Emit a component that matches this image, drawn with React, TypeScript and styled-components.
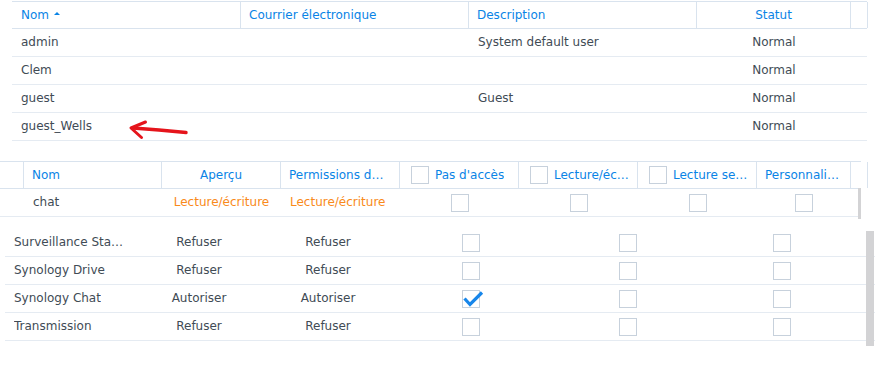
import styled, { createGlobalStyle } from 'styled-components';

const BLUE = '#0a84e6';
const TEXT = '#414b55';
const ORANGE = '#f98a1a';
const LINE = '#e5ebf2';
const HEAD_LINE = '#d9e3ee';

const GlobalStyle = createGlobalStyle`
  html, body {
    margin: 0;
    padding: 0;
    background: #ffffff;
  }
  body {
    font-family: 'DejaVu Sans', Verdana, sans-serif;
    font-size: 12px;
    color: ${TEXT};
  }
`;

const Page = styled.div`
  width: 894px;
  height: 380px;
  padding-top: 1px;
  box-sizing: border-box;
  overflow: hidden;
  display: flex;
  flex-direction: column;
  align-items: flex-start;
`;

const Table = styled.div<{ $left: number; $width: number; $gap: number }>`
  position: relative;
  margin-left: ${p => p.$left}px;
  margin-top: ${p => p.$gap}px;
  width: ${p => p.$width}px;
`;

const HeaderRow = styled.div<{ $cols: string }>`
  display: grid;
  grid-template-columns: ${p => p.$cols};
  height: 28px;
  box-sizing: border-box;
  border-top: 1px solid ${HEAD_LINE};
  border-bottom: 1px solid ${HEAD_LINE};
`;

const HeadCell = styled.div<{ $align?: string; $pl?: number; $pr?: number }>`
  display: flex;
  align-items: center;
  justify-content: ${p => (p.$align === 'center' ? 'center' : 'flex-start')};
  gap: 6px;
  min-width: 0;
  padding: 0 ${p => p.$pr ?? 8}px 0 ${p => p.$pl ?? 8}px;
  border-right: 1px solid ${HEAD_LINE};
  color: ${BLUE};
  line-height: 26px;
  white-space: nowrap;
  overflow: hidden;
`;

const HeadLabel = styled.span`
  min-width: 0;
  overflow: hidden;
  text-overflow: ellipsis;
`;

const SortUp = styled.span`
  display: inline-block;
  width: 0;
  height: 0;
  margin-left: -1px;
  margin-top: -3px;
  border-left: 3px solid transparent;
  border-right: 3px solid transparent;
  border-bottom: 3px solid ${BLUE};
`;

const BodyRow = styled.div<{ $cols: string }>`
  position: relative;
  display: grid;
  grid-template-columns: ${p => p.$cols};
  height: 28px;
  box-sizing: border-box;
  border-bottom: 1px solid ${LINE};
`;

const Cell = styled.div<{ $align?: string; $tone?: 'orange' }>`
  display: flex;
  align-items: center;
  justify-content: ${p => (p.$align === 'center' ? 'center' : 'flex-start')};
  min-width: 0;
  padding: 0 9px;
  line-height: 27px;
  color: ${p => (p.$tone === 'orange' ? ORANGE : TEXT)};
  white-space: nowrap;
  overflow: hidden;
`;

const CellText = styled.span`
  min-width: 0;
  overflow: hidden;
  text-overflow: ellipsis;
`;

const Box = styled.span`
  position: relative;
  flex: none;
  display: inline-block;
  width: 18px;
  height: 18px;
  box-sizing: border-box;
  border: 1px solid #c7d1dc;
  background: #fff;
`;

const Tick = styled.svg`
  position: absolute;
  left: -1px;
  top: -1px;
  overflow: visible;
`;

const Scrollbar = styled.div<{ $w: number; $h: number; $top: number; $right: number }>`
  position: absolute;
  right: ${p => p.$right}px;
  top: ${p => p.$top}px;
  width: ${p => p.$w}px;
  height: ${p => p.$h}px;
  background: #d3d3d5;
`;

const Annotation = styled.svg`
  position: absolute;
  left: 114px;
  top: 6px;
  overflow: visible;
`;

function Checkbox({ checked }: { checked?: boolean }) {
  return (
    <Box>
      {checked && (
        <Tick width='18' height='18' viewBox='0 0 18 18'>
          <path
            d='M2.5 8.5 L8 14.5 L20 2.5'
            fill='none'
            stroke='#1786ea'
            strokeWidth='3.2'
          />
        </Tick>
      )}
    </Box>
  );
}

const USERS_COLS = '229px 228px 228px 154px 16px';
const users = [
  { name: 'admin', mail: '', desc: 'System default user', status: 'Normal' },
  { name: 'Clem', mail: '', desc: '', status: 'Normal' },
  { name: 'guest', mail: '', desc: 'Guest', status: 'Normal' },
  { name: 'guest_Wells', mail: '', desc: '', status: 'Normal', mark: true },
];

const SHARE_COLS = '24px 138px 119px 119px 119px 119px 119px 94px 10px';
const APPS_COLS = '130px 128px 130px 156px 158px 150px 18px';
const apps = [
  { name: 'Surveillance Station', a: 'Refuser', b: 'Refuser', ok: false },
  { name: 'Synology Drive', a: 'Refuser', b: 'Refuser', ok: false },
  { name: 'Synology Chat', a: 'Autoriser', b: 'Autoriser', ok: true },
  { name: 'Transmission', a: 'Refuser', b: 'Refuser', ok: false },
];

export default function App() {
  return (
    <>
      <GlobalStyle />
      <Page>
        <Table $left={12} $width={855} $gap={0}>
          <HeaderRow $cols={USERS_COLS}>
            <HeadCell $pl={9}>
              <HeadLabel>Nom</HeadLabel>
              <SortUp />
            </HeadCell>
            <HeadCell>Courrier électronique</HeadCell>
            <HeadCell>Description</HeadCell>
            <HeadCell $align='center'>Statut</HeadCell>
            <HeadCell />
          </HeaderRow>
          {users.map(u => (
            <BodyRow key={u.name} $cols={USERS_COLS}>
              <Cell>{u.name}</Cell>
              <Cell>{u.mail}</Cell>
              <Cell>{u.desc}</Cell>
              <Cell $align='center'>{u.status}</Cell>
              <Cell />
              {u.mark && (
                <Annotation width='64' height='22' viewBox='0 0 64 22'>
                  <path
                    d='M7 9 L33 11 L60 13.5'
                    fill='none'
                    stroke='#e5141b'
                    strokeWidth='3.4'
                    strokeLinecap='round'
                  />
                  <path
                    d='M19.5 3 L5 9 L15.5 18.5'
                    fill='none'
                    stroke='#e5141b'
                    strokeWidth='3'
                    strokeLinecap='round'
                    strokeLinejoin='round'
                  />
                </Annotation>
              )}
            </BodyRow>
          ))}
        </Table>

        <Table $left={0} $width={861} $gap={20}>
          <HeaderRow $cols={SHARE_COLS}>
            <HeadCell />
            <HeadCell>Nom</HeadCell>
            <HeadCell $align='center'>Aperçu</HeadCell>
            <HeadCell $pr={10}>
              <HeadLabel>Permissions de l'application</HeadLabel>
            </HeadCell>
            <HeadCell $pl={11} $pr={6}>
              <Checkbox />
              <HeadLabel>Pas d'accès</HeadLabel>
            </HeadCell>
            <HeadCell $pl={11} $pr={6}>
              <Checkbox />
              <HeadLabel>Lecture/écriture</HeadLabel>
            </HeadCell>
            <HeadCell $pl={11} $pr={6}>
              <Checkbox />
              <HeadLabel>Lecture seule</HeadLabel>
            </HeadCell>
            <HeadCell>
              <HeadLabel>Personnaliser</HeadLabel>
            </HeadCell>
            <HeadCell />
          </HeaderRow>
          <BodyRow $cols={SHARE_COLS}>
            <Cell />
            <Cell>chat</Cell>
            <Cell $align='center' $tone='orange'>
              Lecture/écriture
            </Cell>
            <Cell $tone='orange'>Lecture/écriture</Cell>
            <Cell $align='center'>
              <Checkbox />
            </Cell>
            <Cell $align='center'>
              <Checkbox />
            </Cell>
            <Cell $align='center'>
              <Checkbox />
            </Cell>
            <Cell $align='center'>
              <Checkbox />
            </Cell>
            <Cell />
          </BodyRow>
          <Scrollbar $w={3} $h={31} $top={27} $right={0} />
        </Table>

        <Table $left={5} $width={870} $gap={12}>
          {apps.map(a => (
            <BodyRow key={a.name} $cols={APPS_COLS}>
              <Cell>
                <CellText>{a.name}</CellText>
              </Cell>
              <Cell $align='center'>{a.a}</Cell>
              <Cell $align='center'>{a.b}</Cell>
              <Cell $align='center'>
                <Checkbox checked={a.ok} />
              </Cell>
              <Cell $align='center'>
                <Checkbox />
              </Cell>
              <Cell $align='center'>
                <Checkbox />
              </Cell>
              <Cell />
            </BodyRow>
          ))}
          <Scrollbar $w={8} $h={115} $top={2} $right={1} />
        </Table>
      </Page>
    </>
  );
}
